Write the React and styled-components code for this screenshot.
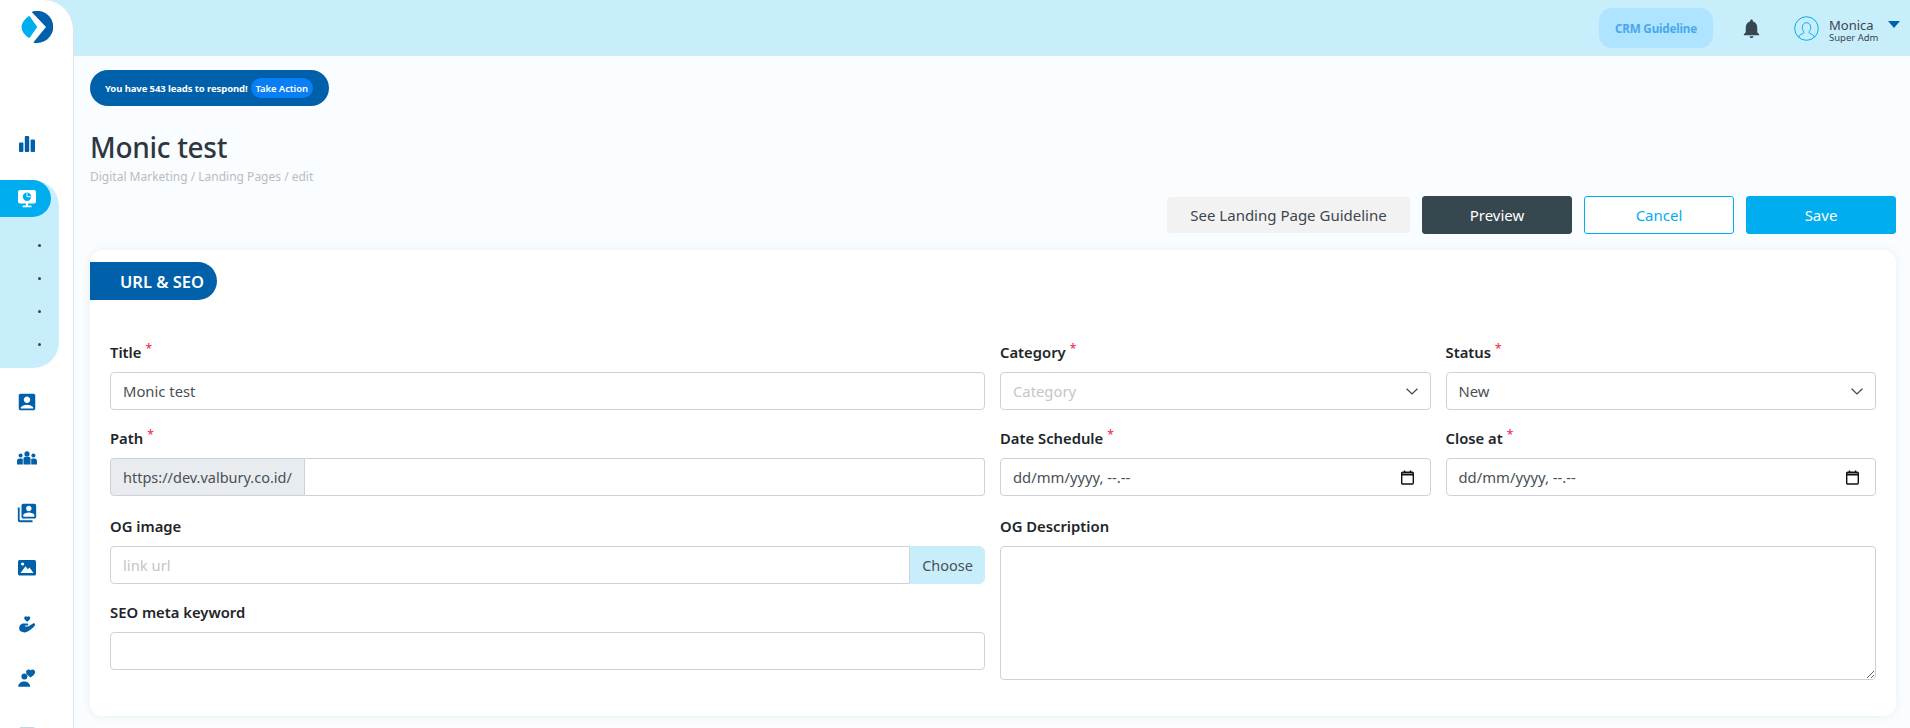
import React from 'react'
import styled, { createGlobalStyle } from 'styled-components'
import { MdAccountBox, MdSwitchAccount, MdNotifications } from 'react-icons/md'

const GlobalStyle = createGlobalStyle`
  html, body {
    margin: 0;
    height: 100%;
    overflow: hidden;
    background: #f9fdff;
    font-family: "Noto Sans", "Open Sans", sans-serif;
    color: #212529;
  }
  * { box-sizing: border-box; }
`

const Shell = styled.div`
  display: flex;
  height: 728px;
  overflow: hidden;
`

const SideWrap = styled.div`
  width: 74px;
  flex: none;
  background: #c9eefb;
`

const Sidebar = styled.aside`
  height: 100%;
  overflow: hidden;
  background: #fff;
  border-right: 1px solid #dfe3e8;
  border-top-right-radius: 30px;
  padding-top: 11px;
`

const LogoWrap = styled.div`
  height: 34px;
  padding-left: 21px;
  margin-bottom: 97px;
`

const NavIcon = styled.div`
  height: 24px;
  display: flex;
  align-items: center;
  justify-content: center;
  width: 54px;
  color: #0060a9;
  font-size: 22px;
  margin-top: ${p => p.$top ?? 31}px;
`

const SubPanel = styled.div`
  width: 59px;
  height: 188px;
  margin-top: 24px;
  background: #c9eefb;
  border-radius: 0 26px 26px 0;
`

const ActivePill = styled.div`
  width: 51px;
  height: 37px;
  background: #00aeef;
  border-radius: 0 19px 19px 0;
  display: flex;
  align-items: center;
  justify-content: center;
  padding-left: 3px;
`

const DotList = styled.ul`
  list-style: none;
  margin: 0;
  padding: 12px 0 0 38px;
`

const Dot = styled.li`
  height: 33px;
  display: flex;
  align-items: center;
  &::before {
    content: '';
    width: 3px;
    height: 3px;
    border-radius: 50%;
    background: #37474f;
  }
`

const Main = styled.div`
  flex: 1;
  min-width: 0;
`

const Header = styled.header`
  height: 56px;
  background: #c9eefb;
  display: flex;
  align-items: center;
  justify-content: flex-end;
  padding-right: 10px;
`

const GuideButton = styled.button`
  width: 114px;
  height: 40px;
  border: 0;
  border-radius: 13px;
  background: #aee4ff;
  color: #4aa8ea;
  font: 700 11.7px "Noto Sans", sans-serif;
  letter-spacing: -0.2px;
  margin-right: 27px;
`

const Bell = styled.div`
  color: #37474f;
  font-size: 23px;
  display: flex;
  margin-right: 31px;
`

const UserBlock = styled.div`
  display: flex;
  align-items: center;
`

const UserText = styled.div`
  margin-left: 10px;
  width: 50px;
  line-height: 1;
  color: #37474f;
  white-space: nowrap;
  padding-top: 6px;
`

const UserName = styled.div`
  font-size: 13px;
`

const UserRole = styled.div`
  font-size: 9.5px;
  margin-top: 1px;
`

const Caret = styled.div`
  width: 0;
  height: 0;
  margin: -8px 0 0 9px;
  border-left: 6px solid transparent;
  border-right: 6px solid transparent;
  border-top: 7px solid #0060a9;
`

const Content = styled.main`
  padding: 14px 14px 0 16px;
`

const LeadBanner = styled.div`
  display: inline-flex;
  align-items: center;
  height: 36px;
  width: 239px;
  padding-left: 15px;
  border-radius: 18px;
  background: #0060a9;
  color: #fff;
  font-size: 9.5px;
  font-weight: 700;
  letter-spacing: -0.1px;
  white-space: nowrap;
`

const TakeAction = styled.span`
  margin-left: 3px;
  height: 20px;
  padding: 0 5px;
  display: flex;
  align-items: center;
  border-radius: 10px;
  background: #0a7ef5;
  font-weight: 600;
`

const PageTitle = styled.h1`
  margin: 21px 0 0;
  font-size: 28px;
  line-height: 40px;
  font-weight: 500;
  letter-spacing: -0.3px;
  color: #2f3640;
`

const Breadcrumb = styled.div`
  font-size: 12px;
  line-height: 18px;
  margin-top: 1px;
  color: #b9bcc0;
`

const Actions = styled.div`
  display: flex;
  justify-content: flex-end;
  align-items: center;
  gap: 12px;
  margin-top: 10px;
`

const Action = styled.button`
  width: ${p => p.$width || 150}px;
  height: ${p => (p.$plain ? 36 : 38)}px;
  border-radius: 3px;
  font: 15px "Noto Sans", sans-serif;
  border: 1px solid ${p => p.$border};
  background: ${p => p.$bg};
  color: ${p => p.$color};
`

const Card = styled.section`
  margin-top: 16px;
  height: 466px;
  background: #fff;
  border-radius: 12px;
  box-shadow: 0 0 8px rgba(40, 60, 80, 0.08);
  padding-top: 12px;
`

const TabLabel = styled.div`
  width: 127px;
  height: 38px;
  padding-left: 30px;
  display: flex;
  align-items: center;
  background: #0060a9;
  color: #fff;
  font-size: 16.5px;
  font-weight: 600;
  border-radius: 0 19px 19px 0;
`

const FormGrid = styled.div`
  margin: 42px 20px 0;
  display: grid;
  grid-template-columns: 875px 1fr;
  column-gap: 15px;
`

const Column = styled.div`
  min-width: 0;
`

const TwoUp = styled.div`
  display: grid;
  grid-template-columns: 1fr 1fr;
  column-gap: 15px;
`

const Field = styled.div`
  margin-bottom: ${p => p.$gap ?? 18}px;
`

const Label = styled.label`
  display: block;
  height: 30px;
  font-size: 14.8px;
  font-weight: 600;
  line-height: 20px;
  color: #212529;
`

const Star = styled.sup`
  color: #f0324b;
  font-size: 12px;
  font-weight: 500;
  margin-left: 4px;
  line-height: 0;
  vertical-align: 5px;
`

const boxStyle = `
  width: 100%;
  height: 38px;
  border: 1px solid #ced1da;
  border-radius: 4px;
  background: #fff;
  padding: 0 12px;
  font: 14.8px "Noto Sans", sans-serif;
  color: #495057;
  outline: none;
  &::placeholder { color: #c4c6c9; opacity: 1; }
`

const Input = styled.input`
  ${boxStyle}
`

const FakeBox = styled.div`
  ${boxStyle}
  display: flex;
  align-items: center;
  justify-content: space-between;
  color: ${p => (p.$muted ? '#c4c6c9' : '#495057')};
`

const TextArea = styled.textarea`
  ${boxStyle}
  display: block;
  height: 134px;
  resize: vertical;
`

const Group = styled.div`
  display: flex;
  height: 38px;
`

const Addon = styled.span`
  flex: none;
  display: flex;
  align-items: center;
  padding: 0 ${p => p.$pad || 12}px;
  font-size: 14.5px;
  color: #495057;
  border: 1px solid ${p => p.$line};
  background: ${p => p.$bg};
  border-radius: ${p => p.$radius};
`

const GroupInput = styled(Input)`
  flex: 1;
  min-width: 0;
  border-radius: ${p => p.$radius};
  ${p => p.$noLeft && 'border-left: 0;'}
`

const BarsIcon = () => (
  <svg width="16" height="16" viewBox="0 0 16 16" fill="currentColor">
    <rect x="0" y="6.5" width="4.4" height="9.5" rx="1" />
    <rect x="5.8" y="0" width="4.4" height="16" rx="1" />
    <rect x="11.6" y="3.5" width="4.4" height="12.5" rx="1" />
  </svg>
)

const Logo = () => (
  <svg width="32" height="32" viewBox="0 0 32 32">
    <path d="M8.3 4.7L16.3 16 8.3 27.3Q.5 22 .5 16 .5 10 8.3 4.7Z" fill="#00aeef" />
    <path d="M10.7.9A16 16 0 1 1 12.3 31.4L25 16Z" fill="#0060a9" />
  </svg>
)

const MonitorIcon = () => (
  <svg width="18" height="18" viewBox="0 0 18 18">
    <rect x="0" y="0" width="18" height="13.5" rx="2" fill="#fff" />
    <rect x="8" y="13" width="2" height="3" fill="#fff" />
    <rect x="4.5" y="15.6" width="9" height="1.7" rx="0.5" fill="#fff" />
    <circle cx="9" cy="6.7" r="4.2" fill="#00aeef" />
    <path d="M9 6.7V2.5M9 6.7H13.2" stroke="#fff" strokeWidth="0.9" />
  </svg>
)

const TeamIcon = () => (
  <svg width="20" height="14" viewBox="0 0 20 14" fill="#0060a9">
    <circle cx="3.6" cy="4.6" r="2" />
    <circle cx="10" cy="2.9" r="2.6" />
    <circle cx="16.4" cy="4.6" r="2" />
    <path d="M0 13.6V10c0-1.500 1-2.600 2.500-2.600h2.300c.5 0 .8.200 1 .5V13.600zM6.500 13.600V8c0-1.300.9-2.200 2.100-2.200h2.800c1.200 0 2.100.9 2.100 2.200v5.600zM14.200 13.600V7.900c.2-.3.5-.5 1-.5h2.300C19 7.400 20 8.500 20 10v3.600z" />
  </svg>
)

const PictureIcon = () => (
  <svg width="18" height="16" viewBox="0 0 18 16">
    <rect width="18" height="15.5" rx="1.6" fill="#0060a9" />
    <circle cx="4.6" cy="4" r="1.6" fill="#fff" />
    <path d="M2.5 13L7.5 6.3 9.8 9.2 11.5 7.5 15.5 13Z" fill="#fff" />
  </svg>
)

const HandHeartIcon = () => (
  <svg width="17" height="17" viewBox="0 0 17 17" fill="#0060a9">
    <path d="M8.2 6.8C6.3 5.3 5.2 4.3 5.2 3 5.2 2 6 1.2 6.9 1.2c.6 0 1 .3 1.3.8.3-.5.7-.8 1.3-.8.9 0 1.7.8 1.7 1.8 0 1.3-1.1 2.3-3 3.8z" transform="translate(0 -1)" />
    <path d="M.2 12.2C.2 9.7 2.2 7.6 4.7 7.6h3.7c1.1 0 1.3 1.9-.2 2H6v1h3.2l4.8-3c1.6-.9 3 .9 1.7 2.2-2 2.1-4.3 4.6-7.6 6-1.3.6-2.9.8-4.4.3C.9 15.500.2 14 .2 12.2z" />
  </svg>
)

const PersonHeartIcon = () => (
  <svg width="18" height="18" viewBox="0 0 18 18" fill="#0060a9">
    <path d="M12.600 8.400C9.800 6.400 8.100 5 8.100 3 8.100 1.500 9.200.4 10.500.4c.9 0 1.600.4 2.100 1.200.5-.8 1.200-1.200 2.100-1.200 1.300 0 2.400 1.100 2.400 2.600 0 2-1.700 3.400-4.500 5.400z" />
    <circle cx="6.400" cy="7.400" r="3" />
    <path d="M.2 17.800c0-3.300 2.800-5.300 6-5.300s6 2 6 5.300z" />
  </svg>
)

const AvatarIcon = () => (
  <svg width="25" height="25" viewBox="0 0 25 25" fill="none" stroke="#00aeef" strokeWidth="1">
    <circle cx="12.5" cy="12.5" r="11.8" />
    <path d="M4.800 21.200c.4-2.200 2-2.900 4-3.600 1-.4 1.300-1 1-1.900-1-1.200-1.500-2.600-1.500-4.400 0-2.800 1.700-4.600 4.200-4.600s4.200 1.800 4.200 4.600c0 1.800-.5 3.200-1.500 4.400-.3.900 0 1.500 1 1.900 2 .7 3.600 1.400 4 3.600" />
  </svg>
)

const CalendarIcon = () => (
  <svg width="13" height="15" viewBox="0 0 13 15" fill="none" stroke="#111" style={{ marginRight: 4 }}>
    <rect x="0.7" y="2.300" width="11.600" height="11.700" rx="1" strokeWidth="1.4" />
    <path d="M.7 4.500h11.600" strokeWidth="2" />
    <path d="M3.500 .5v2M9.500 .5v2" strokeWidth="1.400" />
  </svg>
)

const ChevronIcon = () => (
  <svg width="12" height="7" viewBox="0 0 12 7" fill="none" stroke="#3d4650" strokeWidth="1.200">
    <path d="M.6.7L6 6 11.400.7" />
  </svg>
)

const Required = () => <Star>*</Star>

const App = () => {
  const dots = [0, 1, 2, 3]

  return (
    <>
      <GlobalStyle />
      <Shell>
        <SideWrap>
          <Sidebar>
            <LogoWrap>
              <Logo />
            </LogoWrap>
            <NavIcon $top={-10}>
              <BarsIcon />
            </NavIcon>
            <SubPanel>
              <ActivePill>
                <MonitorIcon />
              </ActivePill>
              <DotList>
                {dots.map(d => (
                  <Dot key={d} />
                ))}
              </DotList>
            </SubPanel>
            <NavIcon $top={22}>
              <MdAccountBox />
            </NavIcon>
            <NavIcon $top={32}>
              <TeamIcon />
            </NavIcon>
            <NavIcon>
              <MdSwitchAccount />
            </NavIcon>
            <NavIcon>
              <PictureIcon />
            </NavIcon>
            <NavIcon $top={32}>
              <HandHeartIcon />
            </NavIcon>
            <NavIcon $top={30}>
              <PersonHeartIcon />
            </NavIcon>
            <NavIcon $top={34}>
              <MdAccountBox />
            </NavIcon>
          </Sidebar>
        </SideWrap>
        <Main>
          <Header>
            <GuideButton>CRM Guideline</GuideButton>
            <Bell>
              <MdNotifications />
            </Bell>
            <UserBlock>
              <AvatarIcon />
              <UserText>
                <UserName>Monica</UserName>
                <UserRole>Super Adm</UserRole>
              </UserText>
              <Caret />
            </UserBlock>
          </Header>
          <Content>
            <LeadBanner>
              You have 543 leads to respond!
              <TakeAction>Take Action</TakeAction>
            </LeadBanner>
            <PageTitle>Monic test</PageTitle>
            <Breadcrumb>Digital Marketing / Landing Pages / edit</Breadcrumb>
            <Actions>
              <Action $plain $width={243} $border="#f3f2f2" $bg="#f3f2f2" $color="#3d4650">
                See Landing Page Guideline
              </Action>
              <Action $border="#37474f" $bg="#37474f" $color="#fff">
                Preview
              </Action>
              <Action $border="#00aeef" $bg="#fff" $color="#00aeef">
                Cancel
              </Action>
              <Action $border="#00aeef" $bg="#00aeef" $color="#fff">
                Save
              </Action>
            </Actions>
            <Card>
              <TabLabel>URL &amp; SEO</TabLabel>
              <FormGrid>
                <Column>
                  <Field>
                    <Label>
                      Title
                      <Required />
                    </Label>
                    <Input defaultValue="Monic test" />
                  </Field>
                  <Field $gap={20}>
                    <Label>
                      Path
                      <Required />
                    </Label>
                    <Group>
                      <Addon $bg="#e9ecef" $line="#ced1da" $radius="4px 0 0 4px">
                        https://dev.valbury.co.id/
                      </Addon>
                      <GroupInput $noLeft $radius="0 4px 4px 0" />
                    </Group>
                  </Field>
                  <Field>
                    <Label>OG image</Label>
                    <Group>
                      <GroupInput $radius="4px 0 0 4px" placeholder="link url" />
                      <Addon $pad={11} $bg="#c9eefb" $line="#c9eefb" $radius="0 6px 6px 0">
                        Choose
                      </Addon>
                    </Group>
                  </Field>
                  <Field $gap={0}>
                    <Label>SEO meta keyword</Label>
                    <Input />
                  </Field>
                </Column>
                <Column>
                  <TwoUp>
                    <Field>
                      <Label>
                        Category
                        <Required />
                      </Label>
                      <FakeBox $muted>
                        Category
                        <ChevronIcon />
                      </FakeBox>
                    </Field>
                    <Field>
                      <Label>
                        Status
                        <Required />
                      </Label>
                      <FakeBox>
                        New
                        <ChevronIcon />
                      </FakeBox>
                    </Field>
                    <Field $gap={20}>
                      <Label>
                        Date Schedule
                        <Required />
                      </Label>
                      <FakeBox>
                        dd/mm/yyyy, --.--
                        <CalendarIcon />
                      </FakeBox>
                    </Field>
                    <Field $gap={20}>
                      <Label>
                        Close at
                        <Required />
                      </Label>
                      <FakeBox>
                        dd/mm/yyyy, --.--
                        <CalendarIcon />
                      </FakeBox>
                    </Field>
                  </TwoUp>
                  <Field $gap={0}>
                    <Label>OG Description</Label>
                    <TextArea />
                  </Field>
                </Column>
              </FormGrid>
            </Card>
          </Content>
        </Main>
      </Shell>
    </>
  )
}

export default App
